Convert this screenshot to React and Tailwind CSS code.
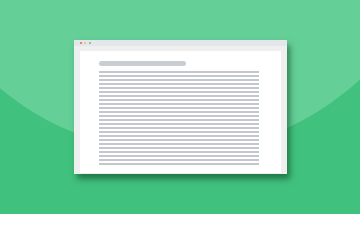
import React from 'react';

const lines = Array.from({ length: 24 });

const App = () => {
    return (
        <div className="relative w-[360px] h-[214px] overflow-hidden bg-[#41c17e] flex items-center justify-center">
            {/* big light circle behind the window */}
            <div className="absolute left-[-97px] top-[-392px] w-[544px] h-[544px] rounded-full bg-[#64cf97]" />

            {/* browser window */}
            <div className="relative w-[213px] h-[134px] flex flex-col bg-[#efeff0] shadow-[3px_5px_6px_rgba(0,50,20,0.5)]">
                {/* title bar */}
                <div className="h-[6px] bg-[#e3e6ea] flex items-center gap-[2.5px] pl-[6px]">
                    <span className="w-[2px] h-[2px] rounded-full bg-[#e85a5c]" />
                    <span className="w-[2px] h-[2px] rounded-full bg-[#eec23c]" />
                    <span className="w-[2px] h-[2px] rounded-full bg-[#6cc173]" />
                </div>

                {/* page */}
                <div className="flex-1 flex px-[6px] pt-[5px] pb-[1px]">
                    <div className="flex-1 bg-white pt-[10px] pl-[19px] flex flex-col">
                        <div className="w-[87px] h-[5px] rounded-full bg-[#c9ced3]" />
                        <div className="mt-[5px] w-[160px] flex flex-col gap-[2px]">
                            {lines.map((_, i) => (
                                <div key={i} className="h-[2px] bg-[#c3c8cd]" />
                            ))}
                        </div>
                    </div>
                </div>
            </div>
        </div>
    );
};

export default App;
